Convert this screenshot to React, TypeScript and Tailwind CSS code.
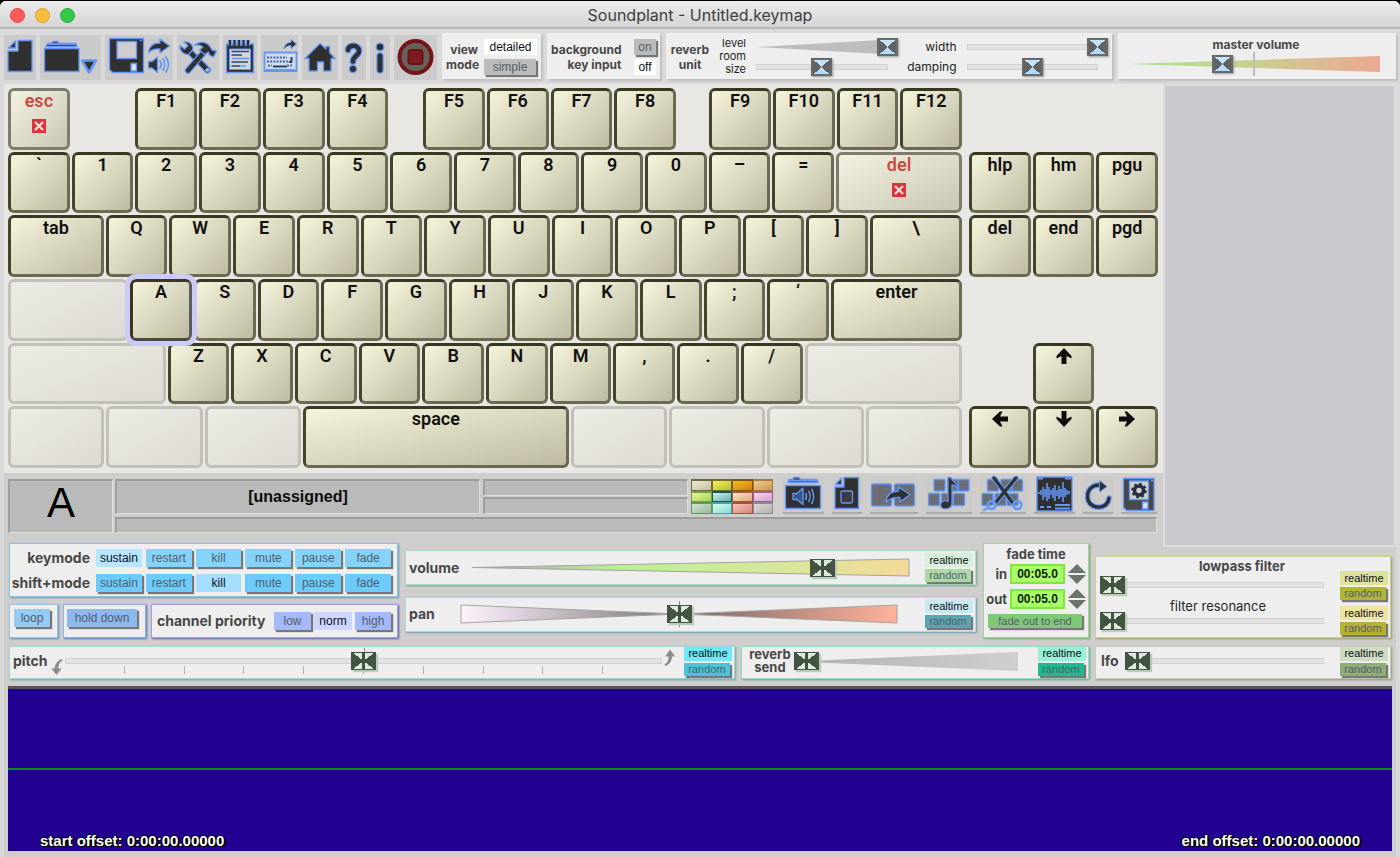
import React, { useState } from 'react';

type Kids = { children?: React.ReactNode };

const DARK = '#303030';
const BLUE = '#6496f5';

/* ---------- sliders ---------- */

const blueThumb =
  '[&::-webkit-slider-thumb]:appearance-none [&::-webkit-slider-thumb]:w-[21px] [&::-webkit-slider-thumb]:h-[18px] [&::-webkit-slider-thumb]:border-2 [&::-webkit-slider-thumb]:border-[#67696b] [&::-webkit-slider-thumb]:bg-[conic-gradient(from_48deg,#606264_0_84deg,#b4dcfa_84deg_180deg,#606264_180deg_264deg,#c4e2f8_264deg)] [&::-webkit-slider-thumb]:shadow-[1px_1px_2px_#999]';

const greenThumb =
  '[&::-webkit-slider-thumb]:appearance-none [&::-webkit-slider-thumb]:w-[25px] [&::-webkit-slider-thumb]:h-[18px] [&::-webkit-slider-thumb]:border [&::-webkit-slider-thumb]:border-[#435443] [&::-webkit-slider-thumb]:bg-[linear-gradient(90deg,transparent_0_10px,#435443_10px_13px,transparent_13px),conic-gradient(from_52deg,#435443_0_76deg,#dfe8dd_76deg_180deg,#435443_180deg_256deg,#dfe8dd_256deg)] [&::-webkit-slider-thumb]:shadow-[2px_2px_1px_#bccabb]';

function Slider({
  label,
  value,
  blue,
  className = '',
  children,
}: Kids & { label: string; value: number; blue?: boolean; className?: string }) {
  const [v, setV] = useState(value);
  return (
    <div className={`grid h-5 min-w-0 items-center ${className}`}>
      <div className="[grid-area:1/1] min-w-0">{children}</div>
      <input
        type="range"
        aria-label={label}
        min={0}
        max={100}
        value={v}
        onChange={(e) => setV(Number(e.target.value))}
        className={`[grid-area:1/1] z-10 m-0 h-5 w-full min-w-0 appearance-none bg-transparent ${blue ? blueThumb : greenThumb}`}
      />
    </div>
  );
}

const Track = ({ className = '' }: { className?: string }) => (
  <div className={`h-[6px] border border-[#d2d2d2] bg-[#e2e2e2] ${className}`} />
);

function Wedge({ id, stops, outline, points = '0,50 100,0 100,100', className }: {
  id: string; stops: string[]; outline?: boolean; points?: string; className: string;
}) {
  return (
    <svg viewBox="0 0 100 100" preserveAspectRatio="none" className={`block w-full overflow-visible ${className}`}>
      <defs>
        <linearGradient id={id}>
          {stops.map((s, i) => (
            <stop key={i} offset={i / (stops.length - 1)} stopColor={s} />
          ))}
        </linearGradient>
      </defs>
      <polygon points={points} fill={`url(#${id})`} stroke={outline ? '#a5a3a3' : 'none'} vectorEffect="non-scaling-stroke" />
    </svg>
  );
}

/* ---------- buttons and panels ---------- */

function Toggle({ on, onBg, offBg, className = '', children }: Kids & {
  on?: boolean; onBg: string; offBg: string; className?: string;
}) {
  return (
    <button
      type="button"
      aria-pressed={!!on}
      className={`flex items-center justify-center whitespace-nowrap font-['Liberation_Sans',sans-serif] ${
        on ? `${onBg} text-[#0b1020]` : `${offBg} text-[#53606c] shadow-[2px_2px_1px_#777]`
      } ${className}`}
    >
      {children}
    </button>
  );
}

function Randomizer({ onBg, offBg }: { onBg: string; offBg: string }) {
  return (
    <div className="flex w-12 shrink-0 flex-col gap-0.5">
      <Toggle on onBg={onBg} offBg={offBg} className="h-[14px] w-full text-[11px]">realtime</Toggle>
      <Toggle onBg={onBg} offBg={offBg} className="h-[13px] w-[46px] text-[11px]">random</Toggle>
    </div>
  );
}

const panel = 'bg-[#eee] border';

const Label = ({ children, size = 'text-[14px]', className = '' }: Kids & { size?: string; className?: string }) => (
  <span className={`whitespace-nowrap font-bold text-[#484848] ${size} ${className}`}>{children}</span>
);

/* ---------- icons ---------- */

function Icon({ box, label, className = '', children }: Kids & { box: string; label: string; className?: string }) {
  const [, , w, h] = box.split(' ').map(Number);
  return (
    <button type="button" aria-label={label} className={`shrink-0 bg-[#cbcbcb] ${className}`}>
      <svg viewBox={box} width={w} height={h} fill={DARK} stroke={BLUE} strokeWidth="1.3" strokeLinejoin="round" className="block">
        {children}
      </svg>
    </button>
  );
}

const Outlined = ({ d, w }: { d: string; w: number }) => (
  <g fill="none" strokeLinecap="round">
    <path d={d} strokeWidth={w + 2.4} />
    <path d={d} strokeWidth={w} stroke={DARK} />
  </g>
);

const NewIcon = () => (
  <Icon box="4 35 32 45" label="new">
    <path d="M18 40.5H32V71.5H8V51H18Z" />
    <path d="M8.5 48 15.5 41V48Z" />
  </Icon>
);

const OpenIcon = () => (
  <Icon box="40 35 61 45" label="open">
    <path d="M44.5 48.5H79V71.5H44.5Z" />
    <path d="M46 46.5 47.5 43.5H51.5L53 41.5H57.5L59 43.5H76L77 46.5Z" />
    <path d="M47.5 44H76" strokeWidth="2" />
    <path d="M82 60.5H96L89 72.5Z" strokeWidth="2.5" />
  </Icon>
);

const SaveIcon = () => (
  <Icon box="105 35 68 45" label="save and export">
    <path d="M109.5 38.500H143.5V72.5H112.5L109.5 69.5Z" />
    <path d="M117 41.5H136.5V58.5H117Z" fill="#cfcfcf" />
    <path d="M131 63.5H136.5V71H131Z" fill="#d8e4fb" />
    <path d="M139.5 40.5H142" />
    <path d="M148.5 53C149 46 154 43 160 43V39L169.5 46 160 53V49C155 48.5 151 50 148.5 53Z" />
    <path d="M148.5 61.5H152L157.5 57V72.5L152 68H148.5Z" />
    <g fill="none" strokeWidth="1.8" strokeLinecap="round">
      <path d="M160 61Q162.5 64.5 160 68" />
      <path d="M163 59Q166.5 64.5 163 70" />
      <path d="M166 57Q171 64.5 166 72" />
    </g>
  </Icon>
);

const ToolsIcon = () => (
  <Icon box="177 35 42 45" label="settings">
    <Outlined w={4.6} d="M207.500 70 190 52" />
    <circle cx="207.5" cy="70" r="1.8" fill="#cbcbcb" strokeWidth="1" />
    <path d="M180 45.5 184.5 49 188 45.5 184 42C190 41 194 46 192.5 50L189 54C184 55.5 179.5 51 180 45.5Z" />
    <Outlined w={4.2} d="M188 70.500 205 51" />
    <path d="M194.5 45C199 41 206 41.5 209.5 46L212 50 216.5 51 213.5 57 209.5 55 208.5 52 204.5 54.5 199.5 50 203 47C200.5 45 198 44.5 194.5 45Z" />
  </Icon>
);

const NotesIcon = () => (
  <Icon box="223 35 34 45" label="notes">
    <path d="M226.5 44H253.5V72.5H226.5Z" />
    <path d="M229.5 49H250.5V69.5H229.5Z" fill="#d2d6de" strokeWidth="1" />
    <path d="M230 40V46M234.5 40V46M239 40V46M243.5 40V46M248 40V46" stroke={BLUE} strokeWidth="4" />
    <path d="M230 40V46M234.5 40V46M239 40V46M243.5 40V46M248 40V46" stroke={DARK} strokeWidth="2" />
    <path d="M231.5 51.5H249M231.5 55H242M231.5 62H248M231.5 66H240" stroke="#2f456e" strokeWidth="1.6" />
    <path d="M232 58.5H249M240 66H246" strokeWidth="1.6" />
  </Icon>
);

const KeyboardIcon = () => (
  <Icon box="260 35 37 45" label="key map export">
    <path d="M263.5 52.5H295.5V71H263.5Z" fill="#d4dcea" strokeWidth="1.8" />
    <path d="M266 57.5H286M266 61.5H288M267 65.5H271M286 65.5H292" stroke="#3e64b0" strokeWidth="2" strokeDasharray="2 1.2" />
    <path d="M272 66.5H286M290.5 57V62H288" fill="none" stroke="#29406e" strokeWidth="2" />
    <path d="M265 69.5H294" strokeWidth="1" />
    <path d="M283 49C283.5 45 286 42.5 290 42.5V39.5L295.5 44 290 48.5V45.5C287 45.5 285 46.5 283 49Z" strokeWidth="1" />
  </Icon>
);

const HomeIcon = () => (
  <Icon box="302 35 36 45" label="home">
    <path d="M320 43.5 326 49V46.5H329.5V52.5L335 58.5H331V71H323.5V62H317.5V71H309V58.5H305Z" />
  </Icon>
);

const HelpIcon = () => (
  <Icon box="342 35 24 45" label="help">
    <Outlined w={4.4} d="M348 50C348 44.5 359 44 359 51C359 56 353 55.5 353 61.5" />
    <circle cx="353" cy="69" r="3.6" />
  </Icon>
);

const InfoIcon = () => (
  <Icon box="369 35 20 45" label="about">
    <Outlined w={5} d="M379 56V70" />
    <circle cx="379" cy="47" r="3.8" />
  </Icon>
);

const StopIcon = () => (
  <Icon box="393 35 43 45" label="stop all">
    <circle cx="414.5" cy="57" r="16" fill="#66635f" stroke="#741517" strokeWidth="4" />
    <rect x="407.5" y="50" width="14" height="14" rx="2.5" fill="#7d1b20" stroke="#6a1214" strokeWidth="2" />
  </Icon>
);

const info = 'border-b-2 border-[#aaa]';

const SoundFolderIcon = () => (
  <Icon box="784 476 41 36" label="assign sound" className={info}>
    <path d="M786.5 485.5H821.5V508.5H786.5Z" />
    <path d="M789 482.5 790 479.5H793.5L795 477.5H800L801.5 479.5H818L819 482.5Z" />
    <path d="M790 480.5H818" strokeWidth="2" />
    <path d="M794 493.5H798L804 488V504.5L798 499.5H794Z" fill="#3b5690" />
    <path d="M806.5 493Q808.5 496.5 806.5 500M809.5 491Q813 496.5 809.5 502M812.5 489Q817 496.5 812.5 504" fill="none" strokeWidth="1.5" />
  </Icon>
);

const KeyDocIcon = () => (
  <Icon box="831 476 30 36" label="new key config" className={info}>
    <path d="M843 477.5H857.5V508.5H834V487H843Z" />
    <path d="M834.5 484.5 840.5 478V484.5Z" />
    <rect x="840" y="491" width="11.5" height="12" rx="1.5" fill="#3b3b40" />
  </Icon>
);

const CopyKeyIcon = () => (
  <Icon box="868 476 48 36" label="copy key" className={info}>
    <rect x="869.5" y="484" width="20" height="22" rx="2" fill="#6b6c76" />
    <rect x="892.5" y="484" width="20" height="22" rx="2" fill="#6b6c76" />
    <path d="M884 502C885 494 890 491 896.5 491V487L908 494.5 898 502V497.5C892 497 887 499 884 502Z" />
  </Icon>
);

const smallKeys = (x: number) => (
  <g fill="#6b6c76">
    <rect x={x + 5.5} y="479.5" width="11" height="11.5" rx="1" />
    <rect x={x + 19} y="479.5" width="11" height="11.5" rx="1" />
    <rect x={x + 30} y="479.5" width="10.5" height="11.5" rx="1" />
    <rect x={x} y="493.5" width="11" height="12" rx="1" />
    <rect x={x + 13} y="493.5" width="11" height="12" rx="1" />
    <rect x={x + 25} y="493.5" width="11" height="12" rx="1" />
  </g>
);

const MusicIcon = () => (
  <Icon box="924 476 46 36" label="key sound" className={info}>
    {smallKeys(926.5)}
    <path d="M946 477.5H949C950 482 956 482 955.5 489C954 486 951.500 485 950 485V503C950 510 938.500 511 938.500 505C938.500 501 943.500 499.500 946 501.500Z" />
  </Icon>
);

const ScissorsIcon = () => (
  <Icon box="981 476 46 36" label="cut key" className={info}>
    {smallKeys(983)}
    <Outlined w={3} d="M995 478 1013 502M1017 478 997 502" />
    <circle cx="992.5" cy="505" r="4" fill="none" strokeWidth="2.5" />
    <circle cx="1018.5" cy="505" r="4" fill="none" strokeWidth="2.5" />
    <path d="M984 510.5 989 508" strokeWidth="2" />
  </Icon>
);

const EditorIcon = () => (
  <Icon box="1035 476 41 36" label="edit sound" className={info}>
    <path d="M1038 477H1073V511H1038Z" />
    <path d="M1039 478.5H1044M1066 478.5H1072" strokeWidth="2" />
    <path d="M1040 492V494M1042 490V495M1044 487V500M1046 489V497M1048 483V501M1050 487V499M1052 490V495M1054 488V498M1056 485V501M1058 490V496M1060 486V499M1062 489V497M1064 482V502M1066 488V497M1068 490V495M1070 491V494" strokeWidth="1.6" />
    <path d="M1041 507H1045M1048 507H1052M1056 505H1071M1056 508.5H1071" strokeWidth="2" />
  </Icon>
);

const ReloadIcon = () => (
  <Icon box="1085 476 30 36" label="reset key" className={info}>
    <Outlined w={3.2} d="M1104 486C1097 483 1089.5 488 1089.5 496.5C1089.5 510 1110 511 1111 498" />
    <path d="M1101.5 480.5 1109 486.5 1101.5 492Z" strokeWidth="1" />
  </Icon>
);

const SaveDefaultIcon = () => (
  <Icon box="1122 476 36 36" label="save defaults" className={info}>
    <path d="M1124.5 478.5H1155V510.5H1127.5L1124.5 507.5Z" fill="#46484c" />
    <path d="M1130.5 481H1149.5V499.5H1130.5Z" fill="#cfcfcf" />
    <circle cx="1140" cy="490.5" r="4.5" fill="none" stroke="#28303c" strokeWidth="3.6" />
    <circle cx="1140" cy="490.5" r="6.8" fill="none" stroke="#28303c" strokeWidth="2" strokeDasharray="2.67 2.67" />
    <path d="M1143.5 502H1149V509H1143.5Z" fill="#d8e4fb" />
    <path d="M1152 480.5H1154" />
  </Icon>
);

/* ---------- keyboard ---------- */

type KeyDef = { t?: React.ReactNode; w?: number; kind?: 'key' | 'blank' | 'gap' | 'locked' | 'selected' };

const U = 637;
const keys = (s: string): KeyDef[] => s.split(' ').map((t) => ({ t }));
const gap = (w = U): KeyDef => ({ w, kind: 'gap' });
const blank = (w: number): KeyDef => ({ w, kind: 'blank' });

const Arrow = ({ turn, name }: { turn: string; name: string }) => (
  <svg viewBox="0 0 20 20" role="img" aria-label={name} className={`mx-auto block size-5 ${turn}`}>
    <path d="M10 2 17.5 10V12.500L12.5 10V18H7.5V10L2.5 12.500V10Z" fill="#0c0c0c" />
  </svg>
);

const mainRows: KeyDef[][] = [
  [{ t: 'esc', kind: 'locked' }, gap(), ...keys('F1 F2 F3 F4'), gap(330), ...keys('F5 F6 F7 F8'), gap(312), ...keys('F9 F10 F11 F12')],
  [...keys('` 1 2 3 4 5 6 7 8 9 0 – ='), { t: 'del', w: 1279, kind: 'locked' }],
  [{ t: 'tab', w: 977 }, ...keys('Q W E R T Y U I O P [ ]'), { t: '\\', w: 939 }],
  [blank(1222), { t: 'A', kind: 'selected' }, ...keys('S D F G H J K L ; ‘'), { t: 'enter', w: 1331 }],
  [blank(1595), ...keys('Z X C V B N M , . /'), blank(1595)],
  [blank(983), blank(983), blank(983), { t: 'space', w: 2679 }, blank(983), blank(983), blank(983), blank(983)],
];

const navRows: KeyDef[][] = [
  [gap()],
  keys('hlp hm pgu'),
  keys('del end pgd'),
  [gap()],
  [gap(), { t: <Arrow turn="" name="up" /> }, gap()],
  [{ t: <Arrow turn="-rotate-90" name="left" /> }, { t: <Arrow turn="rotate-180" name="down" /> }, { t: <Arrow turn="rotate-90" name="right" /> }],
];

const keyBase = 'm-px flex min-w-0 flex-col items-center rounded-md border-[3px] text-[18px] leading-5 font-semibold';
const keyStyles = {
  key: 'border-t-[#39371f] border-l-[#45432c] border-r-[#6b6952] border-b-[#6b6952] bg-linear-to-br from-[#f5f4dc] to-[#bebba2] text-[#111]',
  selected:
    'relative z-10 border-t-[#39371f] border-l-[#39371f] border-r-[#5b5a5c] border-b-[#4b4944] bg-linear-to-br from-[#f5f4dc] to-[#bebba2] text-[#111] outline-[5px] outline-[#cccbf4]',
  locked: 'border-[#7f7d69] bg-linear-to-br from-[#f3f2e2] to-[#c9c6b3] text-[#cc4a45]',
};

function Key({ k }: { k: KeyDef }) {
  const kind = k.kind ?? 'key';
  return (
    <div className="grid min-w-0 shrink basis-0" style={{ flexGrow: k.w ?? U }}>
      {kind === 'blank' && (
        <div className="m-px rounded-md border-[3px] border-[#c3c1b7] bg-linear-to-br from-[#ecece5] to-[#dddad3]" />
      )}
      {(kind === 'key' || kind === 'selected' || kind === 'locked') && (
        <button type="button" className={`${keyBase} ${keyStyles[kind]}`}>
          <span>{k.t}</span>
          {kind === 'locked' && (
            <svg viewBox="0 0 14 14" className="mt-2 size-3.5">
              <rect width="14" height="14" fill="#dc3238" />
              <path d="M3 3 11 11M11 3 3 11" stroke="#f0dcd8" strokeWidth="2.4" />
            </svg>
          )}
        </button>
      )}
    </div>
  );
}

const KeyBlock = ({ rows, className }: { rows: KeyDef[][]; className: string }) => (
  <div className={`grid grid-rows-6 ${className}`}>
    {rows.map((r, i) => (
      <div key={i} className="flex min-h-0">
        {r.map((k, j) => (
          <Key key={j} k={k} />
        ))}
      </div>
    ))}
  </div>
);

/* ---------- sections ---------- */

const topPanel = 'border-t border-[#eee] bg-[#eee] shadow-[2px_2px_2px_#bdbdbd]';

function Toolbar() {
  return (
    <header className="flex items-start gap-1.5 bg-[#dadada] px-1 py-1">
      <nav className="-mr-px flex gap-1 pt-0.5">
        <NewIcon />
        <OpenIcon />
        <SaveIcon />
        <ToolsIcon />
        <NotesIcon />
        <KeyboardIcon />
        <HomeIcon />
        <HelpIcon />
        <InfoIcon />
        <StopIcon />
      </nav>
      <div className={`flex h-[46px] w-[99px] items-center justify-between px-1 ${topPanel}`}>
        <Label size="text-[12px]" className="w-8 text-right leading-[15px]">view<br />mode</Label>
        <div className="flex flex-col gap-1">
          <Toggle on onBg="bg-white" offBg="bg-[#bbb]" className="h-4 w-[53px] text-[12px]">detailed</Toggle>
          <Toggle onBg="bg-white" offBg="bg-[#bbb]" className="h-4 w-[52px] text-[12px]">simple</Toggle>
        </div>
      </div>
      <div className={`flex h-[46px] w-[113px] items-center justify-between px-1 ${topPanel}`}>
        <Label size="text-[12px]" className="text-right leading-[15px]">background<br />key input</Label>
        <div className="flex flex-col gap-1">
          <Toggle onBg="bg-white" offBg="bg-[#bbb]" className="h-4 w-[22px] text-[12px]">on</Toggle>
          <Toggle on onBg="bg-white" offBg="bg-[#bbb]" className="h-4 w-[22px] text-[12px]">off</Toggle>
        </div>
      </div>
      <div className={`flex h-[46px] w-[446px] items-center px-1 ${topPanel}`}>
        <Label size="text-[12px]" className="w-10 text-center leading-[15px]">reverb<br />unit</Label>
        <div className="flex w-9 flex-col text-right text-[11px] leading-[13px] text-[#222]">
          <span>level</span>
          <span>room</span>
          <span>size</span>
        </div>
        <div className="ml-2.5 min-w-0 flex-1">
          <Slider blue label="level" value={100}>
            <Wedge id="lvl" stops={['#bdbdbd', '#bdbdbd']} className="h-4" />
          </Slider>
          <Slider blue label="room size" value={46}><Track className="mr-2.5" /></Slider>
        </div>
        <div className="flex w-[59px] flex-col text-right text-[12px] leading-5 text-[#222]">
          <span>width</span>
          <span>damping</span>
        </div>
        <div className="ml-2.5 min-w-0 flex-1">
          <Slider blue label="width" value={100}><Track className="mr-2.5" /></Slider>
          <Slider blue label="damping" value={46}><Track className="mr-2.5" /></Slider>
        </div>
      </div>
      <div className={`flex h-[46px] flex-1 flex-col items-center pr-4 pl-2 ${topPanel}`}>
        <Label size="text-[12px]" className="mt-0.5 ml-1.5 leading-[18px]">master volume</Label>
        <Slider blue label="master volume" value={37} className="w-full">
          <div className="relative">
            <Wedge id="mst" stops={['#a9e58c', '#c8cf90', '#eba891']} className="h-4" />
            <span className="absolute -top-1 left-1/2 h-6 w-0.5 bg-[#bcbcb4]" />
          </div>
        </Slider>
      </div>
    </header>
  );
}

const swatches = [
  'from-[#eeead2] to-[#c5c0a4] border-[#6d6848]',
  'from-[#f3f35c] to-[#b9b832] border-[#716e1e]',
  'from-[#e8c020] to-[#d97a10] border-[#7c5410]',
  'from-[#f0cd94] to-[#cc9650] border-[#a37b3c]',
  'from-[#e2f59c] to-[#a8d650] border-[#70a03c]',
  'from-[#c4f6f4] to-[#6fa9a8] border-[#1d5555]',
  'from-[#f8e6c8] to-[#dfa67c] border-[#995f3c]',
  'from-[#f4daea] to-[#d0a2cc] border-[#a05a9c]',
  'from-[#cfe2ce] to-[#98bc98] border-[#62916a]',
  'from-[#dcfcea] to-[#7cdcd4] border-[#46a5a0]',
  'from-[#f4c4b4] to-[#d8847c] border-[#b04a44]',
  'from-[#dcdcd6] to-[#b0b0b0] border-[#8c8c90]',
];

const well = 'bg-[#bababa] border-t-2 border-l-2 border-t-[#9c9c9c] border-l-[#a0a0a0] border-b border-r border-b-[#ddd] border-r-[#ddd]';

function KeyInfo() {
  return (
    <section className="flex gap-0.5 bg-[#d0cecd] pt-1.5 pr-1.5 pb-1 pl-1">
      <div className={`flex w-[105px] items-center justify-center pb-2 font-['Liberation_Sans',sans-serif] text-[42px] leading-none text-black ${well}`}>A</div>
      <div className="flex min-w-0 flex-1 flex-col gap-[3px]">
        <div className="flex h-[35px] gap-[3px]">
          <div className={`flex flex-1 items-center justify-center font-['Liberation_Sans',sans-serif] text-[16px] font-bold text-[#0a0a0a] ${well}`}>[unassigned]</div>
          <div className="flex w-[205px] flex-col gap-px">
            <div className={`flex-1 ${well}`} />
            <div className={`flex-1 ${well}`} />
          </div>
          <div className="grid w-[82px] grid-cols-4 grid-rows-3">
            {swatches.map((s) => (
              <button type="button" aria-label="key color" key={s} className={`border-t-2 border-r border-b border-l bg-linear-to-br ${s}`} />
            ))}
          </div>
          <div className="-mt-[3px] ml-[7px] flex w-[374px] items-start justify-between">
            <SoundFolderIcon />
            <KeyDocIcon />
            <CopyKeyIcon />
            <MusicIcon />
            <ScissorsIcon />
            <EditorIcon />
            <ReloadIcon />
            <SaveDefaultIcon />
          </div>
        </div>
        <div className={`h-4 ${well}`} />
      </div>
    </section>
  );
}

const modes = ['sustain', 'restart', 'kill', 'mute', 'pause', 'fade'];

function ModeRow({ label, active, onBg, offBg }: { label: string; active: string; onBg: string; offBg: string }) {
  return (
    <div className="flex items-center gap-1.5" role="group" aria-label={label}>
      <Label className="w-20 text-right leading-4">{label}</Label>
      <div className="grid flex-1 grid-cols-6 gap-1">
        {modes.map((m) => (
          <Toggle key={m} on={m === active} onBg={onBg} offBg={offBg} className="h-[18px] text-[12px]">{m}</Toggle>
        ))}
      </div>
    </div>
  );
}

function TimeField({ label }: { label: string }) {
  const [t, setT] = useState('00:05.0');
  return (
    <div className="flex items-center justify-end gap-[3px]">
      <label htmlFor={`fade-${label}`} className="text-[13px] leading-4 font-bold text-[#484848]">{label}</label>
      <input
        id={`fade-${label}`}
        value={t}
        onChange={(e) => setT(e.target.value)}
        className="h-5 w-[55px] border-2 border-[#7ee63c] bg-[#a8ff68] text-center font-['Liberation_Sans',sans-serif] text-[12px] font-bold text-[#101c08]"
      />
      <div className="flex flex-col gap-0.5">
        <button type="button" aria-label={`increase fade ${label}`}>
          <svg viewBox="0 0 18 9" className="block h-[9px] w-[18px]"><path d="M9 0 18 9H0Z" fill="#6a756a" /></svg>
        </button>
        <button type="button" aria-label={`decrease fade ${label}`}>
          <svg viewBox="0 0 18 9" className="block h-[9px] w-[18px]"><path d="M9 9 18 0H0Z" fill="#6a756a" /></svg>
        </button>
      </div>
    </div>
  );
}

function Parameters() {
  return (
    <section className="flex flex-col gap-2 px-[5px] pt-1.5">
      <div className="flex items-end gap-[7px]">
        <div className="flex w-[389px] flex-col gap-[7px]">
          <div className={`flex h-[54px] flex-col justify-center gap-[7px] pr-1.5 ${panel} border-[#8cc0dc] shadow-[1px_1px_2px_#5f9cb4]`}>
            <ModeRow label="keymode" active="sustain" onBg="bg-[#b8e6ff]" offBg="bg-[#85d2fb]" />
            <ModeRow label="shift+mode" active="kill" onBg="bg-[#a5deff]" offBg="bg-[#6ccbfb]" />
          </div>
          <div className="flex h-[34px] gap-[5px]">
            <div className={`flex w-[49px] px-1 pt-1 ${panel} border-[#9cc2e4] shadow-[1px_1px_2px_#4f88b8]`}>
              <Toggle onBg="bg-[#b8d8ff]" offBg="bg-[#95caf3]" className="h-[18px] w-9 text-[12px]">loop</Toggle>
            </div>
            <div className={`flex w-[83px] px-[3px] pt-1 ${panel} border-[#94b0e0] shadow-[1px_1px_2px_#4470b4]`}>
              <Toggle onBg="bg-[#b8d8ff]" offBg="bg-[#8db8ee]" className="h-[18px] w-[70px] text-[12px]">hold down</Toggle>
            </div>
            <div className={`flex flex-1 items-center gap-[3px] pr-1.5 pl-[5px] ${panel} border-[#a0a4dc] shadow-[1px_1px_2px_#5459a0]`}>
              <Label className="flex-1 leading-4">channel priority</Label>
              <Toggle onBg="bg-[#ced6ff]" offBg="bg-[#a5b8fa]" className="h-[18px] w-[37px] text-[12px]">low</Toggle>
              <Toggle on onBg="bg-[#ced6ff]" offBg="bg-[#a5b8fa]" className="h-[18px] w-[38px] text-[12px]">norm</Toggle>
              <Toggle onBg="bg-[#ced6ff]" offBg="bg-[#a5b8fa]" className="h-[18px] w-[36px] text-[12px]">high</Toggle>
            </div>
          </div>
        </div>

        <div className="mb-1.5 flex min-w-0 flex-1 flex-col gap-3">
          <div className={`flex h-[35px] items-center pr-[2px] pl-[3px] ${panel} border-[#b2dcc2] shadow-[1px_1px_2px_#6fa688]`}>
            <Label className="w-[63px] leading-4">volume</Label>
            <Slider label="volume" value={82} className="mr-4 flex-1">
              <Wedge id="vol" outline stops={['#a8a8a8', '#baf094', '#d4e89a', '#f4da98']} className="h-[17px]" />
            </Slider>
            <Randomizer onBg="bg-[#d9eed9]" offBg="bg-[#acd8a6]" />
          </div>
          <div className={`flex h-[35px] items-center pr-[2px] pb-0.5 pl-[3px] ${panel} border-[#b0d8e0] shadow-[1px_1px_2px_#6699a6]`}>
            <Label className="w-[52px] leading-4">pan</Label>
            <Slider label="pan" value={50} className="mr-7 flex-1">
              <div className="relative">
                <Wedge id="pan" outline points="0,0 50,50 0,100" stops={['#fff2ff', '#787478']} className="h-[18px]" />
                <div className="absolute inset-0">
                  <Wedge id="pan2" outline points="100,0 50,50 100,100" stops={['#786464', '#ffb29a']} className="h-[18px]" />
                </div>
                <span className="absolute -top-1 left-1/2 h-[26px] w-px bg-[#8a8a8a]" />
              </div>
            </Slider>
            <Randomizer onBg="bg-[#c6e8ee]" offBg="bg-[#5aa6b0]" />
          </div>
        </div>

        <div className={`flex h-[95px] w-[106px] flex-col gap-[5px] px-0.5 pt-0.5 ${panel} border-[#a8d4a0] shadow-[1px_1px_2px_#6f9c68]`}>
          <Label size="text-[13px]" className="-mb-[3px] text-center leading-4">fade time</Label>
          <TimeField label="in" />
          <TimeField label="out" />
          <Toggle onBg="bg-[#a8e8a0]" offBg="bg-[#7fc878]" className="ml-0.5 h-[14px] w-[94px] text-[11px]">fade out to end</Toggle>
        </div>

        <div className={`-ml-px flex h-[82px] w-[296px] items-start gap-4 pt-px pr-[2px] pl-1 ${panel} border-[#d0d09c] shadow-[1px_1px_2px_#98985c]`}>
          <div className="flex flex-1 flex-col text-center">
            <Label size="text-[13px]" className="mb-px ml-[60px] leading-4">lowpass filter</Label>
            <Slider label="lowpass filter" value={0}><Track /></Slider>
            <span className="mt-[3px] -mb-[3px] pl-3 text-[13px] leading-4 text-[#282828]">filter resonance</span>
            <Slider label="filter resonance" value={0}><Track /></Slider>
          </div>
          <div className="mt-[13px] flex flex-col gap-1.5">
            <Randomizer onBg="bg-[#dfe29c]" offBg="bg-[#b1b434]" />
            <Randomizer onBg="bg-[#efe3a0]" offBg="bg-[#b6b032]" />
          </div>
        </div>
      </div>

      <div className="flex gap-1.5">
        <div className={`flex h-[33px] flex-1 items-center pr-[2px] pb-[3px] pl-[3px] ${panel} border-[#a4d4dc] shadow-[1px_1px_2px_#6fa0a8]`}>
          <Label className="w-[38px] leading-4">pitch</Label>
          <svg viewBox="0 0 12 18" className="mt-3 h-[17px] w-3"><path d="M11.5 0C7 1 4 5 3.5 10H0L5.5 17 11 10H7.5C7.5 6 8.5 3 11.5 2Z" fill="#8b8b8b" /></svg>
          <Slider label="pitch" value={50} className="mr-0.5 ml-0.5 flex-1">
            <div className="relative">
              <Track />
              <div className="absolute top-2 right-0 left-0 flex justify-evenly">
                {[1, 2, 3, 4, 5, 6, 7, 8, 9].map((n) => (
                  <span key={n} className="h-2 w-px bg-[#b2b0bc]" />
                ))}
              </div>
              <span className="absolute -top-2.5 left-1/2 h-6 w-px bg-[#8a8a8a]" />
            </div>
          </Slider>
          <svg viewBox="0 0 12 18" className="mr-2 mb-2 h-[17px] w-3"><path d="M.5 18C5 17 8 13 8 8H11.5L6 .5 1 8H4.5C4.5 12 3.5 15 .5 16Z" fill="#8b8b8b" /></svg>
          <Randomizer onBg="bg-[#70e8f8]" offBg="bg-[#4cc2d8]" />
        </div>
        <div className={`flex h-[33px] w-[348px] items-center pr-[2px] pb-[3px] pl-1 ${panel} border-[#98dcc4] shadow-[1px_1px_2px_#5fa08a]`}>
          <Label size="text-[13px]" className="w-[48px] text-center leading-[13px]">reverb<br />send</Label>
          <Slider label="reverb send" value={0} className="mr-5 flex-1">
            <Wedge id="rev" stops={['#b0b0b0', '#cfcfcf']} className="h-[19px]" />
          </Slider>
          <Randomizer onBg="bg-[#98f0d6]" offBg="bg-[#20b88e]" />
        </div>
        <div className={`flex h-[33px] w-[296px] items-center pr-[2px] pb-[3px] pl-[5px] ${panel} border-[#c4d0b8] shadow-[1px_1px_2px_#889c78]`}>
          <Label className="w-6 leading-4">lfo</Label>
          <Slider label="lfo" value={0} className="mr-4 flex-1"><Track /></Slider>
          <Randomizer onBg="bg-[#cedcc0]" offBg="bg-[#8eac76]" />
        </div>
      </div>
    </section>
  );
}

const offsetText =
  "self-end font-['Liberation_Sans',sans-serif] text-[15px] leading-4 font-bold text-white [text-shadow:2px_1px_0_#000,1px_1px_0_#000,-1px_0_0_#000,0_-1px_0_#000]";

export default function App() {
  return (
    <div className="min-h-screen bg-black pt-px font-['Inter',sans-serif]">
      <div className="flex min-h-[calc(100vh-1px)] flex-col rounded-t-md bg-[#d9d9d9]">
        <div className="flex h-7 items-center rounded-t-md border-b-2 border-[#b9b9b9] bg-linear-to-b from-[#ececec] to-[#d4d4d4] px-2.5 pt-0.5">
          <div className="flex flex-1 gap-2.5">
            <button type="button" aria-label="close" className="size-[15px] rounded-full border border-[#e64842] bg-[#fc5b57]" />
            <button type="button" aria-label="minimize" className="size-[15px] rounded-full border border-[#e0a033] bg-[#fdbc40]" />
            <button type="button" aria-label="zoom" className="size-[15px] rounded-full border border-[#28a83a] bg-[#34c84a]" />
          </div>
          <h1 className="text-[16px] text-[#404040]">Soundplant - Untitled.keymap</h1>
          <div className="flex-1" />
        </div>

        <Toolbar />

        <main className="mx-1 flex flex-1 flex-col bg-[#d0cecd]">
          <div className="flex">
            <div className="flex shrink-0 flex-col">
              <section className="flex gap-[5px] bg-[#e8e7e4] pt-[3px] pr-1 pb-1 pl-[3px] font-['Roboto',sans-serif]">
                <KeyBlock rows={mainRows} className="h-[382px] w-[956px]" />
                <KeyBlock rows={navRows} className="h-[382px] w-[191px]" />
              </section>
              <KeyInfo />
            </div>
            <aside className="z-10 -mb-2.5 flex-1 border-2 border-[#dcdce0] bg-[#cbcacf]" />
          </div>

          <Parameters />

          <div className="mx-1 mt-[7px] mb-1.5 grid min-h-[165px] flex-1 grid-rows-2 border-t-[3px] border-[#56545e] bg-[#220090]">
            <div className="border-b-2 border-[#0c8a18]" />
            <div className="flex justify-between px-8 pb-0.5">
              <span className={offsetText}>start offset: 0:00:00.00000</span>
              <span className={offsetText}>end offset: 0:00:00.00000</span>
            </div>
          </div>
        </main>
      </div>
    </div>
  );
}
